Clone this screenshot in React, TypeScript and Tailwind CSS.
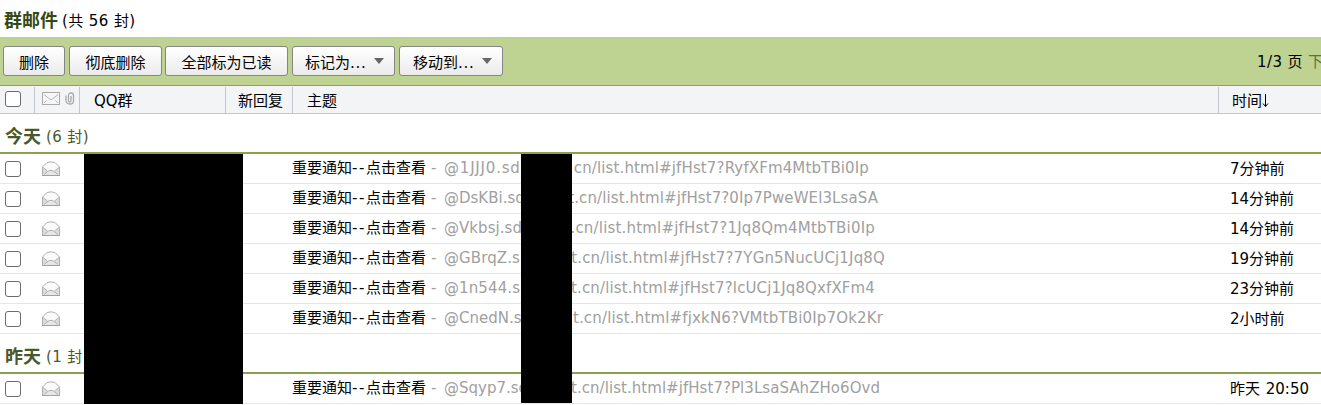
import React from "react";

type Mail = { head: string; headGap: number; tail: string; tailGap: number; end: number; time: string };

const today: Mail[] = [
  { head: "@1JJJ0.sd", headGap: 0.8, tail: "cn/list.html#jfHst7?RyfXFm4MtbTBi0Ip", tailGap: 0.13, end: 869, time: "7分钟前" },
  { head: "@DsKBi.sd", headGap: 0, tail: "t.cn/list.html#jfHst7?0Ip7PweWEl3LsaSA", tailGap: 0.1, end: 878, time: "14分钟前" },
  { head: "@Vkbsj.sd", headGap: 0.05, tail: ".cn/list.html#jfHst7?1Jq8Qm4MtbTBi0Ip", tailGap: 0.19, end: 875, time: "14分钟前" },
  { head: "@GBrqZ.s", headGap: 0.1, tail: "t.cn/list.html#jfHst7?7YGn5NucUCj1Jq8Q", tailGap: 0.16, end: 885, time: "19分钟前" },
  { head: "@1n544.s", headGap: 0.1, tail: "t.cn/list.html#jfHst7?lcUCj1Jq8QxfXFm4", tailGap: 0.13, end: 875, time: "23分钟前" },
  { head: "@CnedN.s", headGap: 0, tail: "t.cn/list.html#fjxkN6?VMtbTBi0Ip7Ok2Kr", tailGap: 0.16, end: 883, time: "2小时前" },
];

const yesterday: Mail[] = [
  { head: "@Sqyp7.sd", headGap: 0, tail: "t.cn/list.html#jfHst7?Pl3LsaSAhZHo6Ovd", tailGap: 0.05, end: 880, time: "昨天 20:50" },
];

function Checkbox() {
  return (
    <input
      type="checkbox"
      className="block size-4 shrink-0 appearance-none rounded-[3px] border border-[#6b6b6b] bg-white"
    />
  );
}

function OpenMail() {
  return (
    <svg width="20" height="17" viewBox="0 0 20 17" className="block shrink-0" fill="none">
      <path d="M1.500 6 6 1.500Q10 .2 14 1.500L18.500 6v8.500h-17z" fill="#fafafa" stroke="#b0b0b0" />
      <path d="M2 7l5 3.500L2 14zM18 7l-5 3.500 5 3.500z" fill="#dcdcdc" />
      <path d="M2 14.500l5.500-4.500q2.500-1.500 5 0L18 14.500z" fill="#e6e6e6" />
      <path d="M2 6.500l4.500 3.500M18 6.500L13.500 10M3 13.500l4.500-3.500q2.500-1.500 5 0l4.500 3.500" stroke="#b0b0b0" />
      <path d="M1 14.500h18" stroke="#a0a0a0" />
    </svg>
  );
}

function ClosedMail() {
  return (
    <svg width="18" height="13" viewBox="0 0 18 13" className="block shrink-0" fill="none">
      <rect x=".5" y=".5" width="17" height="12" fill="#f6f6f6" stroke="#aaa" />
      <path d="M2 2.500l5.500 4.500q1.500 1 3 0L16 2.500M2 11l2.500-2.500M16 11l-2.500-2.500" stroke="#b4b4b4" />
    </svg>
  );
}

function Clip() {
  return (
    <svg width="10" height="13" viewBox="0 0 10 13" className="block shrink-0" fill="none">
      <path
        d="M3.500 8.500V3.500Q3.500 1 6 1T8.500 3.500V9Q8.500 12 5 12T1 9V3.500M3.500 8.500Q3.500 10 4.750 10T6 8.500V4"
        stroke="#aaa"
        strokeWidth="1.300"
      />
    </svg>
  );
}

function Button({ children, className, arrow }: { children: React.ReactNode; className: string; arrow?: boolean }) {
  return (
    <button
      className={`flex h-[30px] items-center rounded-[3px] border border-[#858585] bg-gradient-to-b from-white to-[#ebebeb] ${className}`}
    >
      <span className="mt-[3px] whitespace-nowrap">{children}</span>
      {arrow && (
        <svg width="10" height="6" viewBox="0 0 10 6" className="ml-auto mr-[10px]">
          <path d="M0 0h10L5 6z" fill="#666" />
        </svg>
      )}
    </button>
  );
}

function Dots() {
  return <span className="tracking-[0.7px]">...</span>;
}

function SectionTitle({ day, count }: { day: string; count: string }) {
  return (
    <div className="flex h-10 items-center border-b-2 border-[#87a34d] pl-[5px] pt-[8px] text-[#49592c]">
      <span className="w-[41px] text-[18px] leading-none font-bold">{day}</span>
      <span className="tracking-[0.4px]">{count}</span>
    </div>
  );
}

function Row({ mail }: { mail: Mail }) {
  return (
    <div className="flex h-[30px] border-b border-[#e3e6eb] whitespace-nowrap">
      <div className="w-[41px] pl-[5px] pt-[7px]">
        <Checkbox />
      </div>
      <div className="w-[251px] pt-[7px]">
        <OpenMail />
      </div>
      <div className="w-[152px] pt-[3px]">
        重要通知<span className="tracking-[1.600px]">--</span>点击查看
        <span className="ml-[5px] text-[#a0a0a0]">-</span>
      </div>
      <div className="w-[77px] pt-[3px] text-[#a0a0a0]" style={{ letterSpacing: mail.headGap }}>
        {mail.head}
      </div>
      <div
        className="flex shrink-0 justify-end pt-[3px] text-[#a0a0a0]"
        style={{ width: mail.end - 521, letterSpacing: mail.tailGap }}
      >
        {mail.tail}
      </div>
      <div className="ml-auto w-[91px] pt-1 [word-spacing:1px]">{mail.time}</div>
    </div>
  );
}

export default function App() {
  return (
    <div className="relative h-[405px] w-[1321px] overflow-hidden bg-white font-['DejaVu_Sans','Noto_Sans_CJK_SC',sans-serif] text-[15px] leading-[22px] text-black">
      <header className="flex h-[37px] items-center pl-1 pt-[4px]">
        <h1 className="w-[58px] text-[18px] leading-none font-bold text-[#354813]">群邮件</h1>
        <span className="tracking-[0.4px]">(共 56 封)</span>
      </header>
      <div className="flex h-[49px] items-start border-b border-[#8aa650] bg-[#bed391] pl-[3px] pt-[9px]">
        <Button className="mr-1 w-[62px] justify-center">删除</Button>
        <Button className="mr-[3px] w-[93px] justify-center">彻底删除</Button>
        <Button className="mr-1 w-[123px] justify-center">全部标为已读</Button>
        <Button className="mr-1 w-[103px] pl-3" arrow>
          标记为<Dots />
        </Button>
        <Button className="w-[104px] pl-[13px]" arrow>
          移动到<Dots />
        </Button>
        <div className="ml-auto flex w-[64px] overflow-hidden pt-[5px] whitespace-nowrap">
          <span className="w-[51px] shrink-0 tracking-[0.4px]">1/3 页</span>
          <span className="shrink-0 text-[#5f7434]">下一页</span>
        </div>
      </div>
      <div className="flex h-7 border-b border-[#c4c7d0] bg-[#f2f4f6] pt-px whitespace-nowrap">
        <div className="w-[35px] border-r border-[#c4c7d0] pl-[5px] pt-1">
          <Checkbox />
        </div>
        <div className="flex w-[45px] gap-[5px] border-r border-[#c4c7d0] pl-[7px] pt-[5px]">
          <ClosedMail />
          <Clip />
        </div>
        <div className="w-[146px] border-r border-[#c4c7d0] pl-[14px] pt-[3px]">QQ群</div>
        <div className="w-[67px] border-r border-[#c4c7d0] pl-[12px] pt-[3px]">新回复</div>
        <div className="w-[926px] border-r border-[#c4c7d0] pl-[14px] pt-[3px]">主题</div>
        <div className="flex pl-[13px] pt-[3px]">
          时间
          <svg width="8" height="14" viewBox="0 0 8 14" className="mt-1" fill="none" stroke="currentColor">
            <path d="M3.500 0v12.500M1 9.500l2.500 3 2.500-3" />
          </svg>
        </div>
      </div>
      <SectionTitle day="今天" count="(6 封)" />
      {today.map((m) => (
        <Row key={m.head} mail={m} />
      ))}
      <SectionTitle day="昨天" count="(1 封)" />
      {yesterday.map((m) => (
        <Row key={m.head} mail={m} />
      ))}
      <div className="absolute left-[84px] top-[154px] h-[250px] w-[159px] bg-black" />
      <div className="absolute left-[521px] top-[154px] h-[249px] w-[51px] bg-black" />
    </div>
  );
}
